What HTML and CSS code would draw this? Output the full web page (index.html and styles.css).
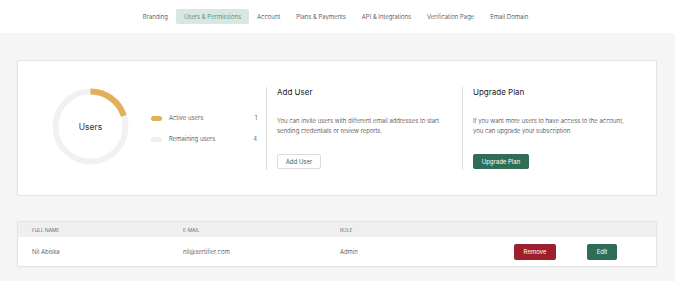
FILE: index.html
```html
<!DOCTYPE html>
<html>
<head>
<meta charset="utf-8">
<link rel="stylesheet" href="styles.css">
</head>
<body>
<nav class="nav">
  <a class="tab">Branding</a>
  <a class="tab active">Users &amp; Permissions</a>
  <a class="tab">Account</a>
  <a class="tab">Plans &amp; Payments</a>
  <a class="tab">API &amp; Integrations</a>
  <a class="tab">Verification Page</a>
  <a class="tab">Email Domain</a>
</nav>
<main class="main">
  <section class="card">
    <div class="chart">
      <svg width="77" height="77" viewBox="0 0 77 77">
        <circle cx="38.5" cy="38.5" r="35" fill="none" stroke="#f1f1f1" stroke-width="6"/>
        <circle cx="38.5" cy="38.5" r="35" fill="none" stroke="#e2b05a" stroke-width="6" stroke-dasharray="44 176" transform="rotate(-90 38.5 38.5)"/>
      </svg>
      <span class="chart-label">Users</span>
    </div>
    <div class="legend">
      <div class="legend-row"><span class="swatch gold"></span><span class="legend-text">Active users</span><span class="count">1</span></div>
      <div class="legend-row"><span class="swatch grey"></span><span class="legend-text">Remaining users</span><span class="count">4</span></div>
    </div>
    <div class="panel panel-add">
      <h2 class="panel-title">Add User</h2>
      <p class="panel-text">You can invite users with different email addresses to start sending credentials or review reports.</p>
      <button class="btn btn-outline">Add User</button>
    </div>
    <div class="panel panel-up">
      <h2 class="panel-title">Upgrade Plan</h2>
      <p class="panel-text narrow">If you want more users to have access to the account, you can upgrade your subscription.</p>
      <button class="btn btn-green">Upgrade Plan</button>
    </div>
  </section>
  <section class="table">
    <div class="row head">
      <span>FULL NAME</span><span>E-MAIL</span><span>ROLE</span><span></span><span></span>
    </div>
    <div class="row body">
      <span>Nil Abiska</span><span>nil@sertifier.com</span><span>Admin</span>
      <span><button class="btn btn-red">Remove</button></span>
      <span><button class="btn btn-green btn-edit">Edit</button></span>
    </div>
  </section>
</main>
</body>
</html>
```
FILE: styles.css
```css
* { box-sizing: border-box; margin: 0; padding: 0; }
body {
  background: #f5f5f5;
  font-family: Inter, "Noto Sans", sans-serif;
  font-weight: 350;
  color: #333;
  width: 675px;
  height: 281px;
  overflow: hidden;
}
.nav {
  height: 33px;
  background: #fff;
  display: flex;
  justify-content: center;
  align-items: center;
  padding-right: 4px;
}
.tab {
  font-size: 6px;
  line-height: 15px;
  height: 15px;
  padding: 0 8px;
  border-radius: 2px;
  color: #333;
}
.tab.active {
  background: #d8e7e1;
  color: #3d7a64;
}
.main {
  padding: 27px 18px 0 17px;
}
.card {
  height: 136px;
  background: #fff;
  border: 1px solid #e4e4e4;
  border-radius: 2px;
  box-shadow: 0 0 2px rgba(0,0,0,0.06);
  display: flex;
  align-items: center;
  padding-left: 34px;
}
.chart {
  position: relative;
  width: 77px;
  height: 77px;
  margin-top: -3px;
}
.chart svg { display: block; }
.chart-label {
  position: absolute;
  inset: 0;
  display: flex;
  align-items: center;
  justify-content: center;
  font-size: 8.5px;
  font-weight: 400;
  color: #333;
}
.legend {
  margin-left: 22px;
  width: 106px;
  display: flex;
  flex-direction: column;
  gap: 11px;
  margin-top: 1px;
}
.legend-row {
  display: flex;
  align-items: center;
  font-size: 6px;
  line-height: 10px;
}
.swatch {
  width: 11px;
  height: 5px;
  border-radius: 3px;
  margin-right: 7px;
}
.swatch.gold { background: #e2b05a; }
.swatch.grey { background: #eeeeee; }
.legend-text { flex: 1; }
.count { text-align: right; }
.panel {
  height: 83px;
  border-left: 1px solid #dddddd;
  padding-left: 10px;
  margin-top: 1px;
}
.panel-add {
  margin-left: 9px;
  width: 196px;
}
.panel-up {
  flex: 1;
}
.panel-title {
  font-size: 8px;
  font-weight: 400;
  line-height: 11px;
  color: #222;
  margin-bottom: 18px;
}
.panel-text {
  font-size: 6px;
  line-height: 10px;
  width: 168px;
  margin-bottom: 18px;
}
.panel-text.narrow { width: 156px; }
.btn {
  display: block;
  font-family: inherit;
  font-weight: 400;
  font-size: 6px;
  height: 15px;
  border-radius: 2px;
  border: none;
  padding: 0;
  cursor: pointer;
}
.btn-outline {
  background: #fff;
  border: 1px solid #dcdcdc;
  color: #2f6b55;
  width: 44px;
}
.btn-green {
  background: #2f6d57;
  color: #fff;
  width: 56px;
}
.table {
  margin-top: 25px;
  background: #fff;
  border: 1px solid #e4e4e4;
  border-radius: 2px;
  box-shadow: 0 0 2px rgba(0,0,0,0.06);
  overflow: hidden;
}
.row {
  display: grid;
  grid-template-columns: 151px 157px 174px 73px 1fr;
  align-items: center;
  padding-left: 14px;
}
.row.head {
  height: 15px;
  background: #efefef;
  font-size: 4.8px;
  color: #444;
}
.row.body {
  height: 29px;
  font-size: 6px;
}
.btn-red {
  background: #9d1f2b;
  color: #fff;
  width: 42px;
  height: 16px;
}
.btn-edit {
  width: 30px;
  height: 16px;
}
```
